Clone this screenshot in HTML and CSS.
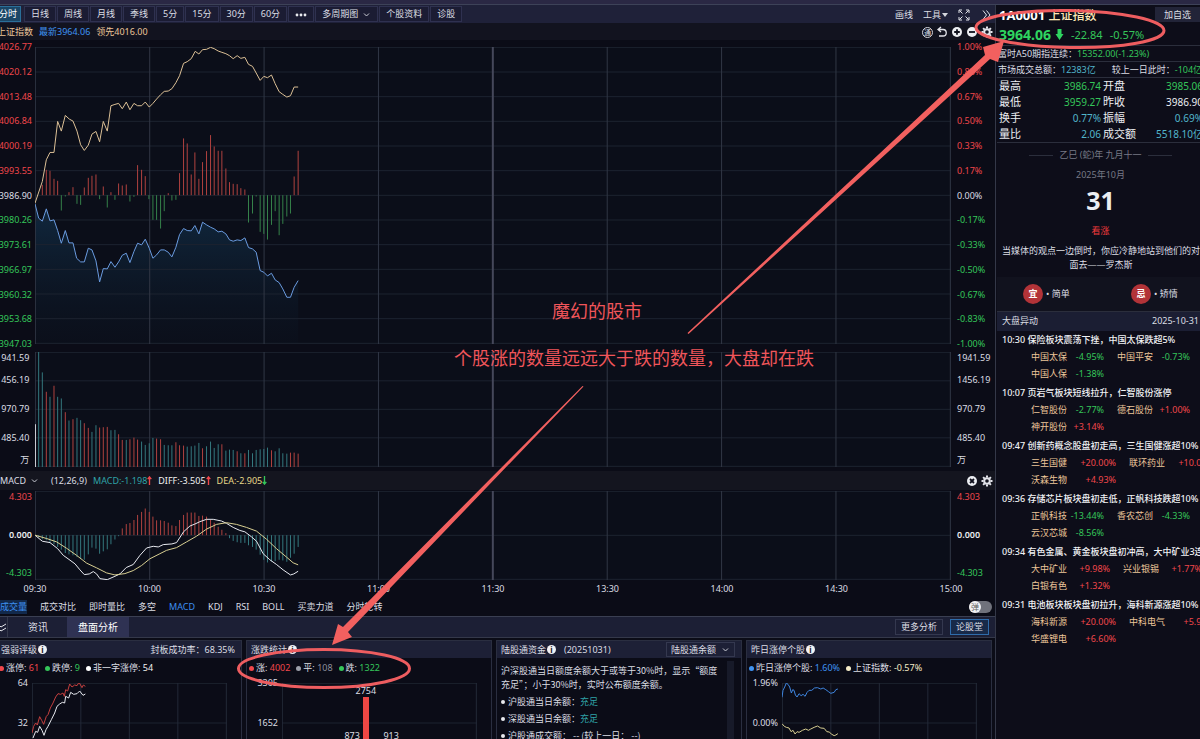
FILE: index.html
```html
<!DOCTYPE html>
<html lang="zh-CN">
<head>
<meta charset="utf-8">
<title>上证指数</title>
<link rel="stylesheet" href="styles.css">
</head>
<body>
<div class="app">
  <div class="top-strip"></div>
  <main class="main">
    <nav class="toolbar">
      <button class="period active">分时</button>
      <button class="period">日线</button>
      <button class="period">周线</button>
      <button class="period">月线</button>
      <button class="period">季线</button>
      <button class="period">5分</button>
      <button class="period">15分</button>
      <button class="period">30分</button>
      <button class="period">60分</button>
      <button class="period" aria-label="更多周期"><svg class="dots" viewBox="0 0 12 4"><circle cx="2" cy="2" r="1.4"/><circle cx="6" cy="2" r="1.4"/><circle cx="10" cy="2" r="1.4"/></svg></button>
      <button class="period">多周期图<svg class="chev" viewBox="0 0 8 6"><path d="M1.5 1.5 4 4l2.500-2.500"/></svg></button>
      <button class="period">个股资料</button>
      <button class="period">诊股</button>
      <div class="tools">
        <button class="plain">画线</button>
        <button class="plain">工具<svg class="caret" viewBox="0 0 6 4"><path d="M0 0h6L3 4z"/></svg></button>
        <button class="plain" aria-label="全屏"><svg class="ico thin" viewBox="0 0 12 12"><path d="M1 4V1h3M8 1h3v3M11 8v3H8M4 11H1V8M1.500 1.500l3 3M10.500 1.500l-3 3M10.500 10.500l-3-3M1.500 10.500l3-3"/></svg></button>
        <button class="plain" aria-label="收起"><svg class="ico thin" viewBox="0 0 12 12"><path d="M3 1.500 6.500 6 3 10.500M6.500 1.500 10 6l-3.500 4.500"/></svg></button>
      </div>
    </nav>

    <div class="info">
      <span class="gold">上证指数</span>
      <span class="blue">最新3964.06</span>
      <span class="gold">领先4016.00</span>
      <div class="info-icons">
        <button class="plain ring">通</button>
        <button class="plain" aria-label="撤销"><svg class="ico" viewBox="0 0 12 12"><path d="M5 1 2 3.500 5 6M2 3.500h5a3 3 0 0 1 0 6.500H3"/></svg></button>
        <button class="plain" aria-label="放大"><svg class="ico solid" viewBox="0 0 12 12"><circle cx="6" cy="6" r="5"/><path d="M6 3.200v5.600M3.200 6h5.600"/></svg></button>
        <button class="plain" aria-label="缩小"><svg class="ico solid" viewBox="0 0 12 12"><circle cx="6" cy="6" r="5"/><path d="M3 6h6"/></svg></button>
        <button class="plain" aria-label="设置"><svg class="ico gear" viewBox="0 0 12 12"><circle cx="6" cy="6" r="2.800"/><path d="M6 .5v2M6 9.500v2M.5 6h2M9.500 6h2M2.100 2.100l1.500 1.500M8.400 8.400l1.500 1.500M2.100 9.900l1.500-1.500M8.400 3.600l1.500-1.500"/></svg></button>
      </div>
    </div>

    <section class="chart price">
      <div class="axis left">
        <span class="up">4026.77</span><span class="up">4020.12</span><span class="up">4013.48</span><span class="up">4006.84</span><span class="up">4000.19</span><span class="up">3993.55</span><span>3986.90</span><span class="down">3980.26</span><span class="down">3973.61</span><span class="down">3966.97</span><span class="down">3960.32</span><span class="down">3953.68</span><span class="down">3947.03</span>
      </div>
      <svg class="plot" id="price" viewBox="105 142 2750 890" preserveAspectRatio="none"></svg>
      <div class="axis right">
        <span class="up">1.00%</span><span class="up">0.83%</span><span class="up">0.67%</span><span class="up">0.50%</span><span class="up">0.33%</span><span class="up">0.17%</span><span>0.00%</span><span class="down">-0.17%</span><span class="down">-0.33%</span><span class="down">-0.50%</span><span class="down">-0.67%</span><span class="down">-0.83%</span><span class="down">-1.00%</span>
      </div>
    </section>

    <section class="chart volume">
      <div class="axis left"><span>1941.59</span><span>1456.19</span><span>970.79</span><span>485.40</span><span>万</span></div>
      <svg class="plot" id="volume" viewBox="105 36 2750 344" preserveAspectRatio="none"></svg>
      <div class="axis right"><span>1941.59</span><span>1456.19</span><span>970.79</span><span>485.40</span><span>万</span></div>
    </section>

    <div class="macd-head">
      <button class="plain">MACD<svg class="chev" viewBox="0 0 8 6"><path d="M1.500 1.500 4 4l2.500-2.500"/></svg></button>
      <span class="params">(12,26,9)</span>
      <span class="teal">MACD:-1.198<svg class="arr red" viewBox="0 0 5 10"><path d="M2.500 10V1M.5 3.500l2-2.500 2 2.500"/></svg></span>
      <span class="white">DIFF:-3.505<svg class="arr red" viewBox="0 0 5 10"><path d="M2.500 10V1M.5 3.500l2-2.500 2 2.500"/></svg></span>
      <span class="yellow">DEA:-2.905<svg class="arr green" viewBox="0 0 5 10"><path d="M2.500 0v9M.5 6.500l2 2.500 2-2.500"/></svg></span>
      <div class="info-icons">
        <button class="plain" aria-label="关闭"><svg class="ico solid" viewBox="0 0 12 12"><circle cx="6" cy="6" r="5"/><path d="m4 4 4 4M8 4 4 8"/></svg></button>
        <button class="plain" aria-label="指标设置"><svg class="ico gear" viewBox="0 0 12 12"><circle cx="6" cy="6" r="2.800"/><path d="M6 .5v2M6 9.500v2M.5 6h2M9.500 6h2M2.100 2.100l1.500 1.500M8.400 8.400l1.500 1.500M2.100 9.900l1.500-1.500M8.400 3.600l1.500-1.500"/></svg></button>
      </div>
    </div>

    <section class="chart macd">
      <div class="axis left"><span class="up">4.303</span><span class="strong">0.000</span><span class="down">-4.303</span></div>
      <svg class="plot" id="macd" viewBox="105 454 2750 264" preserveAspectRatio="none"></svg>
      <div class="axis right"><span class="up">4.303</span><span class="strong">0.000</span><span class="down">-4.303</span></div>
    </section>

    <div class="times"><span>09:30</span><span>10:00</span><span>10:30</span><span>11:00</span><span>11:30</span><span>13:30</span><span>14:00</span><span>14:30</span><span>15:00</span></div>

    <nav class="indicators">
      <button class="plain on mark">成交量</button><button class="plain">成交对比</button><button class="plain">即时量比</button><button class="plain">多空</button><button class="plain on">MACD</button><button class="plain">KDJ</button><button class="plain">RSI</button><button class="plain">BOLL</button><button class="plain">买卖力道</button><button class="plain">分时轮转</button>
      <label class="toggle"><input type="checkbox" aria-label="弹"><span>弹</span></label>
    </nav>

    <nav class="dock">
      <button class="dock-collapse" aria-label="收起"><svg class="ico thin" viewBox="0 0 12 12"><path d="m2 3 3 3 5-3M2 7l3 3 5-3"/></svg></button>
      <button class="dock-tab">资讯</button>
      <button class="dock-tab active">盘面分析</button>
      <div class="dock-right"><button class="box">更多分析</button><button class="box hot">论股堂</button></div>
    </nav>

    <div class="panels">
      <section class="panel">
        <header>强弱评级<i class="tip">i</i><span class="end">封板成功率：68.35%</span></header>
        <div class="legend"><span><b class="dot r"></b>涨停: <em class="up">61</em></span><span><b class="dot g"></b>跌停: <em class="down">9</em></span><span><b class="dot w"></b>非一字涨停: <em class="white">54</em></span></div>
        <div class="mini"><div class="mini-axis"><span>64</span><span>32</span></div><svg class="mini-plot" id="limit" viewBox="97 340 585 360" preserveAspectRatio="none"></svg></div>
      </section>
      <section class="panel">
        <header>涨跌统计<i class="tip">i</i></header>
        <div class="legend"><span><b class="dot r"></b>涨: <em class="up">4002</em></span><span><b class="dot s"></b>平: <em class="mute">108</em></span><span><b class="dot g"></b>跌: <em class="down">1322</em></span></div>
        <div class="mini"><div class="mini-axis"><span>3305</span><span>1652</span></div>
          <div class="bars"><svg class="mini-plot" id="spread" viewBox="0 0 585 360" preserveAspectRatio="none"></svg>
            <span class="bar"></span><span class="val peak">2754</span><span class="val before">873</span><span class="val after">913</span></div>
        </div>
      </section>
      <section class="panel">
        <header>陆股通资金<i class="tip">i</i><span class="date">(20251031)</span>
          <span class="end pick"><select aria-label="陆股通指标"><option>陆股通余额</option></select><svg class="chev" viewBox="0 0 8 6"><path d="M1.500 1.500 4 4l2.500-2.500"/></svg></span></header>
        <div class="funds">
          <p>沪深股通当日额度余额大于或等于30%时，显示“额度充足”；小于30%时，实时公布额度余额。</p>
          <ul><li>沪股通当日余额：<em class="teal">充足</em></li><li>深股通当日余额：<em class="teal">充足</em></li><li>沪股通成交额： -- (较上一日： --)</li></ul>
        </div>
      </section>
      <section class="panel">
        <header>昨日涨停个股<i class="tip">i</i></header>
        <div class="legend"><span><b class="dot b"></b>昨日涨停个股: <em class="blue">1.60%</em></span><span><b class="dot y"></b>上证指数: <em class="cream">-0.57%</em></span></div>
        <div class="mini"><div class="mini-axis"><span>1.96%</span><span>0.00%</span></div><svg class="mini-plot" id="prev" viewBox="9 340 583 360" preserveAspectRatio="none"></svg></div>
      </section>
    </div>
  </main>

  <aside class="side">
    <div class="title"><h1>1A0001 <span>上证指数</span></h1><button class="fav">加自选</button></div>
    <div class="last"><strong>3964.06</strong><svg class="drop" viewBox="0 0 8 11"><path d="M2 0h4v5h2l-4 6-4-6h2z"/></svg><span>-22.84</span><span>-0.57%</span></div>
    <div class="line">富时A50期指连续：<span class="down">15352.00(-1.23%)</span></div>
    <div class="line two"><span>市场成交总额：<span class="cyan">12383亿</span></span><span>较上一日此时：<span class="down">-104亿</span></span></div>
    <table class="quote">
      <tr><th>最高</th><td class="down">3986.74</td><th>开盘</th><td class="down">3985.06</td></tr>
      <tr><th>最低</th><td class="down">3959.27</td><th>昨收</th><td>3986.90</td></tr>
      <tr><th>换手</th><td class="cyan">0.77%</td><th>振幅</th><td class="cyan">0.69%</td></tr>
      <tr><th>量比</th><td class="cyan">2.06</td><th>成交额</th><td class="cyan">5518.10亿</td></tr>
    </table>
    <div class="almanac">
      <div class="lunar">乙巳 (蛇)年 九月十一</div>
      <div class="month">2025年10月</div>
      <div class="day">31</div>
      <div class="mood">看涨</div>
      <p>当媒体的观点一边倒时，你应冷静地站到他们的对面去——罗杰斯</p>
    </div>
    <div class="advice"><span><b>宜</b>• 简单</span><span><b>忌</b>• 矫情</span></div>
    <div class="news-head"><span>大盘异动</span><time>2025-10-31</time></div>
    <div class="news">
      <article><h2>10:30 保险板块震荡下挫，中国太保跌超5%</h2>
        <div><a href="#">中国太保<em class="down">-4.95%</em></a><a href="#">中国平安<em class="down">-0.73%</em></a></div>
        <div><a href="#">中国人保<em class="down">-1.38%</em></a></div></article>
      <article><h2>10:07 页岩气板块短线拉升，仁智股份涨停</h2>
        <div><a href="#">仁智股份<em class="down">-2.77%</em></a><a href="#">德石股份<em class="up">+1.00%</em></a></div>
        <div><a href="#">神开股份<em class="up">+3.14%</em></a></div></article>
      <article class="wide"><h2>09:47 创新药概念股盘初走高，三生国健涨超10%</h2>
        <div><a href="#">三生国健<em class="up">+20.00%</em></a><a href="#">联环药业<em class="up">+10.01%</em></a></div>
        <div><a href="#">沃森生物<em class="up">+4.93%</em></a></div></article>
      <article><h2>09:36 存储芯片板块盘初走低，正帆科技跌超10%</h2>
        <div><a href="#">正帆科技<em class="down">-13.44%</em></a><a href="#">香农芯创<em class="down">-4.33%</em></a></div>
        <div><a href="#">云汉芯城<em class="down">-8.56%</em></a></div></article>
      <article class="medium"><h2>09:34 有色金属、黄金板块盘初冲高，大中矿业3连板</h2>
        <div><a href="#">大中矿业<em class="up">+9.98%</em></a><a href="#">兴业银锡<em class="up">+1.77%</em></a></div>
        <div><a href="#">白银有色<em class="up">+1.32%</em></a></div></article>
      <article class="wide"><h2>09:31 电池板块板块盘初拉升，海科新源涨超10%</h2>
        <div><a href="#">海科新源<em class="up">+20.00%</em></a><a href="#">中科电气<em class="up">+5.93%</em></a></div>
        <div><a href="#">华盛锂电<em class="up">+6.60%</em></a></div></article>
    </div>
  </aside>
</div>

<svg class="notes" viewBox="0 0 1200 739">
  <ellipse cx="1070" cy="29" rx="94" ry="18.500" transform="rotate(1 1070 29)"/>
  <ellipse cx="324" cy="668.500" rx="85.500" ry="19"/>
  <path d="M687.500 333 985 55l-2-8 21-6-6 21-8-3L688.500 334z"/>
  <path d="M582.500 386 343 627l-5-3-6 21 20-8-4-5L583.500 386.500z"/>
  <text x="552" y="318">魔幻的股市</text>
  <text x="454" y="365">个股涨的数量远远大于跌的数量，大盘却在跌</text>
</svg>
<script src="script.js"></script>
</body>
</html>
```

FILE: styles.css
```css
* { box-sizing: border-box; }
body {
  margin: 0;
  overflow: hidden;
  background: #0b0c17;
  color: #dcdee4;
  font: 9px/14px "Noto Sans", "Noto Sans CJK SC", sans-serif;
}
button, select { font: inherit; color: inherit; background: none; border: 0; margin: 0; padding: 0; white-space: nowrap; }
em { font-style: normal; }
a { color: inherit; text-decoration: none; }

/* The content bleeds 4px past both window edges */
.app {
  display: grid;
  grid-template-columns: minmax(0, 1fr) 208px;
  grid-template-rows: 5px minmax(0, 1fr);
  height: 100vh;
  margin: 0 -4px;
}
.top-strip { grid-column: 1 / -1; background: #2a2844; border-bottom: 1px solid #3d4258; }
.main { display: flex; flex-direction: column; min-height: 0; border-right: 1px solid #343848; }

.up { color: #f0474b; }
.down { color: #35c65a; }
.blue { color: #3f93f2; }
.gold { color: #ecc69a; }
.teal { color: #2fa3a8; }
.cyan { color: #52b5cb; }
.white { color: #f2f2f2; }
.yellow { color: #e9d98a; }
.cream { color: #f5ecc8; }
.mute { color: #8d909c; }

.toolbar { display: flex; gap: 1px; height: 18px; padding: 1px 3px 0 0; background: #1f2139; }
.period { height: 16px; padding: 0 6px; border: 1px solid #2f3150; background: #1b1c33; line-height: 14px; }
.period.active { background: #1b4767; border-color: #2a6f99; color: #fff; margin-right: 2px; padding: 0 3px 0 2px; }
.tools, .info-icons { display: flex; align-items: center; margin-left: auto; }
.tools { gap: 10px; }
svg { display: inline-block; vertical-align: middle; }
.dots { width: 12px; height: 4px; fill: #e8e9ee; }
.chev { width: 9px; height: 6px; margin-left: 4px; fill: none; stroke: #c9cbd4; }
.caret { width: 6px; height: 4px; margin-left: 1px; fill: #d3d5dc; }
.ico { display: block; width: 12px; height: 12px; fill: none; stroke: #e3e4ea; stroke-width: 1.3; }
.ico.thin { stroke-width: 1; }
.ico.solid circle { fill: #eceef2; stroke: none; }
.ico.solid path { stroke: #10111d; stroke-width: 1.8; }
.ico.gear { stroke-width: 2; }

.info { display: flex; gap: 6px; height: 17px; padding: 1px 2px 0 1px; background: #12131f; line-height: 16px; }
.info-icons { gap: 3px; }
.ring { width: 11px; height: 11px; border: 1px solid #d3d5dc; border-radius: 50%; font-size: 7px; line-height: 9px; }

.chart { display: grid; grid-template-columns: 39px minmax(0, 1fr) 44px; }
.plot { display: block; width: 100%; background: #0b0e19; }
.axis { display: flex; flex-direction: column; justify-content: space-between; }
.axis span { display: flex; align-items: center; height: 14px; }
.axis.left { align-items: flex-end; padding-right: 3px; }
.axis.right { align-items: flex-start; padding-left: 6px; }
.strong { font-weight: 600; color: #eceef2; }
.price .axis { height: 311px; }
.price .plot { height: 297px; margin: 7px 0; }
.volume .axis { display: grid; grid-template-rows: 14px 1fr 1fr 1fr 14px; height: 116px; }
.volume .axis.left { justify-items: end; }
.volume .axis span { height: auto; align-self: center; }
.volume .plot { height: 115px; margin-top: 1px; }
.macd .axis { height: 90px; }
.macd .plot { height: 89px; margin-top: 1px; }

.plot path, .plot line, .mini-plot path, .mini-plot line { fill: none; vector-effect: non-scaling-stroke; }
.grid-h { stroke: #1d2330; }
.grid-v { stroke: #313745; }
.grid-mid { stroke: #45475a; stroke-width: 2; }
.mini-plot .grid-v { stroke: #232938; }
.s-gold { stroke: #dcc096; }
.s-blue { stroke: #6a9be0; }
.s-sky { stroke: #3f86e0; }
.s-white { stroke: #e8eaf0; }
.s-yellow { stroke: #d8cf92; }
.s-red { stroke: #b0423f; }
.s-green { stroke: #35814a; }
.s-teal { stroke: #34787e; }
.s-brightred { stroke: #c5403f; }
.plot .area { fill: url(#fade); stroke: none; }

.macd-head { display: flex; align-items: center; height: 19px; margin-top: 4px; padding: 0 2px 0 4px; background: #14151f; }
.macd-head .params { margin: 0 6px 0 12px; }
.macd-head .teal, .macd-head .white { margin-right: 6px; }
.arr { width: 5px; height: 9px; margin-top: -2px; fill: none; stroke-width: 1.5; }
.arr.red { stroke: #f0474b; }
.arr.green { stroke: #35c65a; }

.times { display: flex; justify-content: space-between; height: 18px; padding: 0 44px 0 39px; line-height: 18px; }
.times span { display: flex; justify-content: center; width: 0; }

.indicators { display: flex; align-items: center; gap: 13px; height: 18px; padding: 0 3px 0 4px; }
.on { color: #3d8ff0; }
.mark { background: #12294b; }
.toggle { display: flex; position: relative; margin-left: auto; }
.toggle input { appearance: none; width: 23px; height: 12px; margin: 0; border-radius: 6px; background: #70727c; }
.toggle span { position: absolute; left: 0; top: 0; width: 12px; height: 12px; border-radius: 50%; background: #f1f1f3; color: #666; font-size: 8px; line-height: 12px; text-align: center; }

.dock { display: flex; height: 22px; border-top: 1px solid #3a3f52; border-bottom: 1px solid #34384a; background: #1c1f35; font-size: 10px; }
.dock-collapse { width: 12px; border-right: 1px solid #34384a; }
.dock-tab { padding: 0 20px; }
.dock-tab.active { margin-left: -1px; padding: 0 11px; background: #2f3253; color: #fff; }
.dock-right { display: flex; align-items: center; gap: 7px; margin-left: auto; padding-right: 6px; font-size: 9px; }
.box { height: 16px; padding: 0 5px; border: 1px solid #34384f; }
.box.hot { border-color: #2f6cab; background: #182a49; }

.panels { display: grid; grid-template-columns: repeat(4, minmax(0, 1fr)); gap: 4px; flex: 1; min-height: 0; padding: 2px 3px 0 0; }
.panel { overflow: hidden; border: 1px solid #2a2e40; border-bottom: 0; }
.panel header { display: flex; align-items: center; height: 17px; padding: 0 6px 0 4px; background: #1d2036; }
.tip { width: 9px; height: 9px; margin-left: 1px; border-radius: 50%; background: #f0f1f5; color: #14151f; font: bold 8px/9px "Noto Sans", sans-serif; text-align: center; }
.end { margin-left: auto; }
.date { margin-left: 8px; }
.legend { display: flex; gap: 6px; height: 20px; padding-left: 2px; line-height: 20px; white-space: nowrap; }
.dot { display: inline-block; width: 5px; height: 5px; margin: 0 2px 1px 0; border-radius: 50%; vertical-align: middle; }
.r { background: #f0474b; } .g { background: #35c65a; } .w { background: #fff; } .s { background: #9da0aa; } .b { background: #3f93f2; } .y { background: #f5ecc8; }
.mini { display: grid; grid-template-columns: 35px minmax(0, 1fr) 14px; }
.mini-axis { display: flex; flex-direction: column; gap: 30px; padding-right: 4px; line-height: 10px; text-align: right; }
.mini-plot { display: block; width: 100%; height: 120px; margin-top: 5px; }
.bars { position: relative; }
.bar { position: absolute; left: 43%; top: 19px; width: 6px; height: 110px; margin-left: -3px; background: #ee4744; }
.val { position: absolute; line-height: 10px; transform: translateX(-50%); }
.peak { left: 43%; top: 8px; }
.before { left: 36%; top: 53px; }
.after { left: 56%; top: 53px; }
.pick { display: flex; align-items: center; border: 1px solid #34384f; padding: 0 4px; height: 15px; }
.pick select { appearance: none; }
.funds { margin: 3px 7px 0 0; padding: 3px 8px 0 4px; border-right: 7px solid #171a29; height: 90px; font-family: "Noto Sans CJK SC", sans-serif; }
.funds p { margin: 0; }
.funds ul { margin: 1px 0 0; padding: 0; list-style: none; line-height: 17px; }
.funds li { display: flex; align-items: center; gap: 3px; white-space: pre; }
.funds li em { margin-left: -3px; }
.funds li::before { content: ""; width: 4px; height: 4px; border-radius: 50%; background: #e8e9ee; }

.side { min-width: 0; overflow: hidden; padding-left: 1px; background: #0d0d19; }
.title { display: flex; justify-content: space-between; height: 19px; padding: 2px 0 0 2px; }
.title h1 { margin: 0; font-size: 13px; line-height: 16px; color: #fff; white-space: nowrap; }
.title h1 span { font-size: 12px; font-weight: 500; color: #ffe9b8; }
.fav { width: 49px; height: 15px; padding-right: 4px; background: #222438; }
.last { display: flex; align-items: center; height: 22px; padding-left: 2px; border-bottom: 1px solid #2b2e3c; color: #35c65a; font-size: 11px; gap: 7px; }
.last strong { margin-right: -3px; font-size: 14px; color: #2fd560; }
.drop { width: 9px; height: 11px; fill: #2fd560; }
.line { height: 16px; padding-left: 1px; border-bottom: 1px solid #2b2e3c; line-height: 15px; white-space: nowrap; }
.line.two { display: flex; gap: 16px; }
.quote { width: 100%; padding-right: 1px; border-spacing: 0; border-bottom: 1px solid #2b2e3c; line-height: 16px; color: #eceef2; }
.quote th { padding: 0 0 0 2px; font-size: 11px; font-weight: 400; text-align: left; white-space: nowrap; }
.quote td { padding: 0; font-size: 10px; text-align: right; }
.quote th:first-child { width: 24px; }
.quote td:nth-child(2) { width: 80px; }
.quote .down { color: #35c65a; }
.quote .cyan { color: #52b5cb; }
.almanac { padding: 5px 0 5px; text-align: center; }
.lunar { display: flex; align-items: center; justify-content: center; gap: 6px; color: #777a86; }
.lunar::before, .lunar::after { content: ""; width: 24px; border-top: 1px solid #2b2e3c; }
.month { margin-top: 6px; color: #777a86; }
.day { font-size: 25px; font-weight: 700; line-height: 36px; color: #eceef2; }
.mood { margin: 6px 0; color: #f03a3c; }
.almanac p { margin: 0 4px 0 5px; }
.advice { display: grid; grid-template-columns: 1fr 1fr; height: 34px; padding-left: 5px; background: #11121e; }
.advice span { display: flex; align-items: center; padding-left: 21px; }
.advice span + span { padding-left: 28px; }
.advice b { width: 20px; height: 20px; margin-right: 3px; border-radius: 50%; background: #b23338; color: #fff; line-height: 20px; text-align: center; }
.news-head { display: flex; justify-content: space-between; height: 20px; padding: 0 5px; border-top: 1px solid #2b2e3c; background: #1b1e33; line-height: 18px; }
.news article { height: 53px; padding-left: 5px; line-height: 17px; --pct: 37px; }
.news .medium { --pct: 43px; }
.news .wide { --pct: 49px; }
.news h2 { margin: 0; font-size: 9px; font-weight: 500; white-space: nowrap; color: #f0f1f4; }
.news article div { display: flex; gap: 13px; padding-left: 29px; }
.news a { display: flex; color: #ecc69a; white-space: nowrap; }
.news a em { width: var(--pct); text-align: right; }

.notes { position: absolute; left: 0; top: 0; width: 1200px; height: 739px; pointer-events: none; }
.notes ellipse { fill: none; stroke: #ee5d60; stroke-width: 3; }
.notes path { fill: #f2605f; }
.notes text { fill: #f0555a; font-size: 18px; }
```

FILE: script.js
```js
const NS = "http://www.w3.org/2000/svg";

function add(svg, tag, cls, attrs) {
  const el = document.createElementNS(NS, tag);
  el.setAttribute("class", cls);
  for (const k in attrs) el.setAttribute(k, attrs[k]);
  svg.appendChild(el);
  return el;
}

function grid(svg, cols, rows, mid) {
  const [x, y, w, h] = svg.getAttribute("viewBox").split(" ").map(Number);
  for (let i = 0; i <= rows; i++) {
    const v = y + 1 + (h - 3) * i / rows;
    add(svg, "line", "grid-h", { x1: x, x2: x + w, y1: v, y2: v });
  }
  for (let i = 0; i <= cols; i++) {
    const v = x + 1 + (w - 3) * i / cols;
    add(svg, "line", i === mid ? "grid-v grid-mid" : "grid-v", { x1: v, x2: v, y1: y, y2: y + h });
  }
}

function bars(svg, cls, base, data) {
  const d = data.trim().split(/\s+/).map(p => {
    const [x, y] = p.split(":");
    return `M${x} ${base}V${y}`;
  }).join("");
  add(svg, "path", cls, { d });
}

function line(svg, cls, pts) {
  return add(svg, "path", cls, { d: "M" + pts });
}

const price = document.getElementById("price");
price.innerHTML = '<defs><linearGradient id="fade" x1="0" y1="0" x2="0" y2="1"><stop offset="0" stop-color="#12304a" stop-opacity=".8"/><stop offset="1" stop-color="#0d1a2a" stop-opacity=".1"/></linearGradient></defs>';
const low = "105,612 116,655 127,664 139,627 150,663 162,660 173,692 184,730 196,692 207,729 219,729 230,775 242,786 253,786 265,745 276,750 288,783 299,846 310,806 322,807 333,785 345,802 356,786 367,766 379,760 390,788 402,755 413,730 425,735 436,718 448,745 459,775 470,765 482,750 493,750 505,757 516,771 528,742 539,704 551,686 562,692 574,693 585,677 597,702 608,667 620,675 632,682 643,687 655,696 666,694 678,702 689,720 700,724 712,720 723,722 735,714 746,743 758,747 769,757 781,812 792,817 803,828 815,820 826,840 838,848 849,867 861,892 872,892 883,862 895,842";
line(price, "area", low + " 895,1032 105,1032Z");
grid(price, 8, 12, 4);
bars(price, "s-red", 586, "127:555 139:510 150:513 162:537 173:543 207:577 219:562 253:563 265:534 276:528 288:524 310:560 333:577 356:551 367:557 379:554 413:496 425:510 436:529 505:580 539:520 551:416 562:431 574:524 585:458 597:537 608:487 620:454 632:406 643:440 655:453 666:453 678:506 689:547 700:552 712:553 723:565 735:569 883:530 895:453");
bars(price, "s-green", 586, "184:632 196:590 231:612 242:615 299:598 322:623 345:600 390:605 402:591 447:598 459:660 470:660 482:686 493:634 516:602 528:600 746:668 758:641 769:590 781:696 792:702 803:719 815:675 826:634 838:706 849:672 861:650 872:641");
line(price, "s-blue", low);
line(price, "s-gold", "105,610 127,545 139,480 150,458 162,458 173,365 184,394 196,347 208,358 219,364 231,394 242,435 253,452 265,436 276,403 288,395 299,426 310,365 322,394 333,318 345,314 356,311 367,327 379,307 390,330 402,311 413,318 425,318 436,307 448,322 459,311 470,298 482,285 493,275 505,274 516,267 528,249 539,228 551,191 562,186 574,177 586,155 597,163 608,150 620,149 632,143 643,147 655,154 666,158 678,162 689,168 700,177 712,168 723,176 735,173 746,194 758,200 769,220 781,242 792,230 803,234 815,226 826,252 838,276 849,284 861,292 872,288 883,262 895,262");

const volume = document.getElementById("volume");
grid(volume, 8, 4, 4);
bars(volume, "s-white", 380, "106:252");
bars(volume, "s-teal", 380, "116:36 127:97 150:170 173:170 184:175 207:241 231:233 242:240 276:275 288:255 333:270 345:269 379:299 425:304 436:314 448:309 459:293 493:314 505:315 516:315 562:319 574:318 585:316 597:308 620:318 632:304 643:323 655:312 678:331 689:328 700:329 723:339 746:329 758:339 769:329 781:327 792:326 803:322 826:333 838:324 849:339 861:340");
bars(volume, "s-red", 380, "139:155 162:137 196:216 219:237 253:249 265:263 299:262 310:261 322:260 356:282 367:299 390:297 402:292 413:298 470:295 482:297 528:306 539:315 551:316 608:324 666:312 712:333 735:339 815:330 872:337 883:337 895:340");

const macd = document.getElementById("macd");
grid(macd, 8, 2, 4);
bars(macd, "s-red", 585, "367:565 379:552 390:549 402:540 413:525 425:516 436:506 448:516 459:530 470:541 482:541 493:543 505:548 516:556 528:558 539:540 551:525 562:518 574:518 585:518 597:528 608:527 620:530 632:540 643:548 655:560 666:569 678:579");
bars(macd, "s-teal", 585, "116:592 127:597 139:600 150:607 162:612 173:620 184:628 196:638 207:642 219:645 231:650 242:656 253:658 265:642 276:622 288:625 299:640 310:633 322:627 333:612 345:598 356:588 689:594 700:602 712:606 723:608 735:608 746:615 758:620 769:628 781:643 792:658 803:666 815:663 826:662 838:658 849:660 861:664 872:652 883:640 895:620");
line(macd, "s-white", "105,585 127,603 150,607 173,625 190,645 207,657 225,670 240,688 253,702 268,700 280,693 290,700 300,714 322,717 345,707 360,700 379,681 400,672 420,645 440,623 460,618 475,620 490,613 516,611 530,607 551,575 570,558 585,552 600,545 620,538 640,538 665,543 680,550 700,562 720,571 735,575 755,590 770,603 790,640 810,658 830,672 850,688 872,703 882,700 895,692");
line(macd, "s-yellow", "105,585 140,595 170,605 200,624 230,645 260,668 290,682 320,697 345,703 375,699 400,690 425,675 450,655 480,640 500,630 530,622 560,605 590,588 620,567 650,553 680,548 710,553 740,562 770,573 800,597 830,625 860,650 880,667 895,673");

const limit = document.getElementById("limit");
grid(limit, 4, 3);
line(limit, "s-brightred", "97,490 102,470 108,460 113,466 120,441 126,452 132,464 140,440 145,435 152,415 160,400 168,382 175,372 183,374 190,370 194,380 198,360 204,364 210,343 217,352 225,346 232,348 238,338 247,354 251,346 257,350");
line(limit, "s-white", "100,505 108,485 114,488 120,470 127,482 133,497 139,480 145,470 155,450 165,430 172,410 180,403 188,398 195,400 198,380 207,385 213,368 222,374 232,372 240,364 250,377 257,373");
grid(document.getElementById("spread"), 1, 3);
const prev = document.getElementById("prev");
grid(prev, 4, 3);
line(prev, "s-sky", "9,383 12,362 17,352 22,340 27,344 32,352 37,370 41,360 45,362 49,376 54,382 60,372 66,378 72,374 78,380 84,368 90,362 98,362 106,355 115,354 125,358 132,355 140,360 148,366 155,371 165,368 170,360 176,358");
line(prev, "s-yellow", "9,462 16,470 22,473 30,475 36,486 42,482 48,493 54,486 60,488 70,482 80,478 88,482 95,478 105,473 115,469 125,475 135,476 143,486 150,487 158,494 165,498 170,496 176,492");
```
